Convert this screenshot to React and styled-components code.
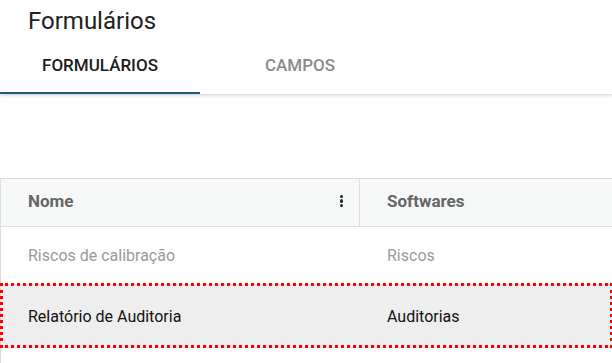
import React from "react";
import styled, { createGlobalStyle } from "styled-components";

const GlobalStyles = createGlobalStyle`
  html, body {
    margin: 0;
    padding: 0;
    background: #fff;
    font-family: Roboto, "Liberation Sans", sans-serif;
  }
  * { box-sizing: border-box; }
`;

const Page = styled.div`
  width: 612px;
  height: 363px;
  overflow: hidden;
  background: #fff;
`;

const Header = styled.header`
  height: 94px;
  background: #fff;
  box-shadow: 0 1px 4px rgba(0, 0, 0, 0.22);
  position: relative;
  z-index: 1;
`;

const Title = styled.h1`
  margin: 0;
  padding: 5px 0 0 28px;
  height: 43px;
  font-size: 24px;
  font-weight: 400;
  color: #212121;
  line-height: 32px;
`;

const Tabs = styled.nav`
  display: flex;
  height: 51px;
`;

const Tab = styled.div`
  width: 200px;
  display: flex;
  align-items: center;
  justify-content: center;
  padding-bottom: 5px;
  font-size: 17px;
  font-weight: 500;
  color: ${(p) => (p.$active ? "#1b1b1b" : "#8a8a8a")};
  border-bottom: 2px solid ${(p) => (p.$active ? "#1d5680" : "transparent")};
`;

const TableWrap = styled.div`
  margin-top: 84px;
  width: 620px;
  border-left: 1px solid #dedede;
  border-top: 1px solid #dedede;
`;

const Row = styled.div`
  display: grid;
  grid-template-columns: 359px 1fr;
  height: ${(p) => p.$h}px;
  align-items: center;
  background: ${(p) => p.$bg || "#fff"};
  border-bottom: 1px solid #dedede;
  position: relative;

  ${(p) =>
    p.$selected &&
    `
    &::after {
      content: "";
      position: absolute;
      left: -1px;
      top: -2px;
      width: 607px;
      bottom: -1px;
      border: 3px dotted #f00;
      pointer-events: none;
    }
  `}
`;

const Cell = styled.div`
  height: 100%;
  display: flex;
  align-items: center;
  justify-content: space-between;
  padding: 0 16px ${(p) => (p.$bold ? 3 : 0)}px 27px;
  font-size: ${(p) => (p.$bold ? 17 : 16)}px;
  color: ${(p) => p.$color};
  font-weight: ${(p) => (p.$bold ? 700 : 400)};
  border-right: ${(p) => (p.$divider ? "1px solid #dedede" : "none")};
`;

const Kebab = styled.span`
  display: flex;
  flex-direction: column;
  gap: 1px;
  span {
    width: 3.5px;
    height: 3.5px;
    border-radius: 50%;
    background: #1a2530;
  }
`;

export default function App() {
  return (
    <Page>
      <GlobalStyles />
      <Header>
        <Title>Formulários</Title>
        <Tabs>
          <Tab $active>FORMULÁRIOS</Tab>
          <Tab>CAMPOS</Tab>
        </Tabs>
      </Header>
      <TableWrap>
        <Row $h={48} $bg="#f7f8f8">
          <Cell $bold $color="#666" $divider>
            Nome
            <Kebab>
              <span />
              <span />
              <span />
            </Kebab>
          </Cell>
          <Cell $bold $color="#666">Softwares</Cell>
        </Row>
        <Row $h={58}>
          <Cell $color="#9a9a9a">Riscos de calibração</Cell>
          <Cell $color="#9a9a9a">Riscos</Cell>
        </Row>
        <Row $h={63} $bg="#eeeeee" $selected>
          <Cell $color="#111">Relatório de Auditoria</Cell>
          <Cell $color="#111">Auditorias</Cell>
        </Row>
        <Row $h={40} />
      </TableWrap>
    </Page>
  );
}
